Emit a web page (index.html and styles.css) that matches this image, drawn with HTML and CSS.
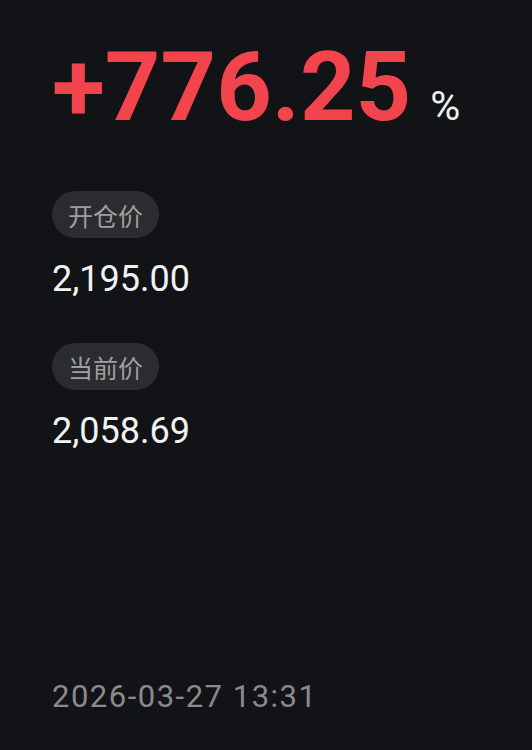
FILE: index.html
```html
<!DOCTYPE html>
<html lang="zh-CN">
<head>
<meta charset="utf-8">
<title>收益</title>
<link rel="stylesheet" href="styles.css">
</head>
<body>
<main class="card">
  <div class="hero"><span class="hero-num">+776.25</span><span class="hero-unit">%</span></div>
  <div class="field">
    <span class="pill">开仓价</span>
    <div class="value">2,195.00</div>
  </div>
  <div class="field field-2">
    <span class="pill">当前价</span>
    <div class="value">2,058.69</div>
  </div>
  <div class="date">2026-03-27 13:31</div>
</main>
</body>
</html>
```
FILE: styles.css
```css
html, body {
  margin: 0;
  padding: 0;
  background: #121316;
}
.card {
  box-sizing: border-box;
  min-height: 750px;
  display: flex;
  flex-direction: column;
  align-items: flex-start;
  padding: 39px 0 33px 52px;
  font-family: Roboto, "Noto Sans CJK SC", sans-serif;
}
.hero {
  line-height: 97px;
  height: 97px;
  white-space: nowrap;
}
.hero-num {
  font-size: 97px;
  font-weight: 700;
  color: #f2444d;
}
.hero-unit {
  font-size: 41px;
  font-weight: 400;
  color: #eeeeee;
  margin-left: 19px;
}
.field {
  display: flex;
  flex-direction: column;
  align-items: flex-start;
  margin-top: 55px;
}
.field-2 {
  margin-top: 42px;
}
.pill {
  display: inline-flex;
  align-items: center;
  height: 47px;
  padding: 0 16px;
  border-radius: 24px;
  background: #2b2c2f;
  color: #9e9e9e;
  font-family: "Noto Sans CJK SC", sans-serif;
  font-size: 25px;
}
.value {
  margin-top: 19px;
  font-size: 36px;
  line-height: 44px;
  color: #f2f2f2;
}
.date {
  margin-top: auto;
  font-size: 31px;
  line-height: 40px;
  letter-spacing: 1.5px;
  color: #8a8a8c;
}
```
